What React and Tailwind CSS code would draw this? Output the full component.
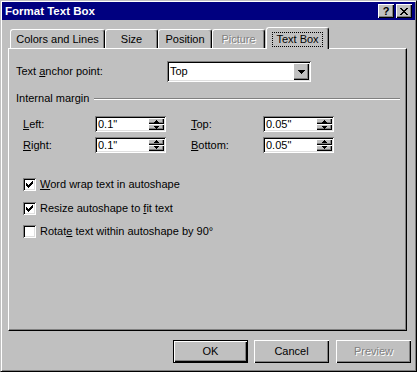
import React from "react";

const raised =
  "shadow-[inset_1px_1px_#fff,inset_-1px_-1px_#000,inset_-2px_-2px_#808080]";
const sunken =
  "shadow-[inset_1px_1px_#808080,inset_-1px_-1px_#fff,inset_2px_2px_#000,inset_-2px_-2px_#dfdfdf]";

function Tab({ w, ml = 0, children, disabled }) {
  return (
    <div
      className={`h-[19px] flex justify-center pt-[3px] leading-[13px] border-l border-t border-white border-r border-r-black rounded-t-[3px] shadow-[inset_-1px_0_#808080] ${
        disabled ? "text-[#808080] [text-shadow:1px_1px_0_#fff]" : "text-black"
      }`}
      style={{ width: w, marginLeft: ml }}
    >
      {children}
    </div>
  );
}

function SpinTri({ up }) {
  return (
    <svg width="5" height="3" viewBox="0 0 5 3" shapeRendering="crispEdges">
      {up ? (
        <>
          <rect x="2" y="0" width="1" height="1" fill="#000" />
          <rect x="1" y="1" width="3" height="1" fill="#000" />
          <rect x="0" y="2" width="5" height="1" fill="#000" />
        </>
      ) : (
        <>
          <rect x="0" y="0" width="5" height="1" fill="#000" />
          <rect x="1" y="1" width="3" height="1" fill="#000" />
          <rect x="2" y="2" width="1" height="1" fill="#000" />
        </>
      )}
    </svg>
  );
}

function Spin({ value }) {
  return (
    <div className={`w-[71px] h-[16px] bg-white p-[2px] flex ${sunken}`}>
      <div className="flex-1 pl-[1px] leading-[12px] text-black">{value}</div>
      <div className="w-[16px] flex flex-col">
        <div className={`h-[6px] bg-[#c0c0c0] flex items-center justify-center ${raised}`}>
          <SpinTri up />
        </div>
        <div className={`h-[6px] bg-[#c0c0c0] flex items-center justify-center ${raised}`}>
          <SpinTri />
        </div>
      </div>
    </div>
  );
}

function Check() {
  const cols = [2, 3, 4, 3, 2, 1, 0];
  return (
    <svg width="7" height="7" viewBox="0 0 7 7" shapeRendering="crispEdges">
      {cols.map((y, x) => (
        <rect key={x} x={x} y={y} width="1" height="3" fill="#000" />
      ))}
    </svg>
  );
}

function CheckRow({ checked, children, className = "" }) {
  return (
    <div className={`flex items-center h-[13px] ${className}`}>
      <div className={`w-[13px] h-[13px] bg-white flex items-center justify-center ${sunken}`}>
        {checked && <Check />}
      </div>
      <div className="ml-[4px] leading-[13px]">{children}</div>
    </div>
  );
}

function Btn({ children, def, disabled, className = "" }) {
  return (
    <div
      className={`w-[75px] h-[23px] flex items-center justify-center bg-[#c0c0c0] ${
        def
          ? "border border-black shadow-[inset_1px_1px_#fff,inset_-1px_-1px_#000,inset_-2px_-2px_#808080]"
          : raised
      } ${disabled ? "text-[#808080] [text-shadow:1px_1px_0_#fff]" : "text-black"} ${className}`}
    >
      {children}
    </div>
  );
}

export default function App() {
  return (
    <div className="w-[417px] h-[372px] bg-[#c0c0c0] border border-t-[#c0c0c0] border-l-[#c0c0c0] border-r-black border-b-black font-['Liberation_Sans',Arial,sans-serif] text-[11px] text-black">
      <div className="w-full h-full p-[1px] shadow-[inset_1px_1px_#fff,inset_-1px_-1px_#808080]">
        {/* Title bar */}
        <div className="h-[18px] bg-[#000080] flex items-center pl-[3px] pr-[3px]">
          <div className="flex-1 text-white font-bold text-[11.5px] leading-[14px]">
            Format Text Box
          </div>
          <div className={`w-[16px] h-[14px] bg-[#c0c0c0] flex items-center justify-center ${raised}`}>
            <span className="font-bold text-[11px] leading-[11px] text-black">?</span>
          </div>
          <div className={`w-[16px] h-[14px] ml-[2px] bg-[#c0c0c0] flex items-center justify-center ${raised}`}>
            <svg width="8" height="7" viewBox="0 0 8 7" shapeRendering="crispEdges">
              <rect x="0" y="0" width="2" height="1" fill="#000" />
              <rect x="6" y="0" width="2" height="1" fill="#000" />
              <rect x="1" y="1" width="2" height="1" fill="#000" />
              <rect x="5" y="1" width="2" height="1" fill="#000" />
              <rect x="2" y="2" width="4" height="1" fill="#000" />
              <rect x="3" y="3" width="2" height="1" fill="#000" />
              <rect x="2" y="4" width="4" height="1" fill="#000" />
              <rect x="1" y="5" width="2" height="1" fill="#000" />
              <rect x="5" y="5" width="2" height="1" fill="#000" />
              <rect x="0" y="6" width="2" height="1" fill="#000" />
              <rect x="6" y="6" width="2" height="1" fill="#000" />
            </svg>
          </div>
        </div>

        {/* Body */}
        <div className="pl-[6px]">
          {/* Tabs */}
          <div className="mt-[7px] h-[21px] flex items-end pl-[2px]">
            <Tab w={95}>Colors and Lines</Tab>
            <Tab w={53}>Size</Tab>
            <Tab w={54}>Position</Tab>
            <Tab w={53} disabled>
              Picture
            </Tab>
            <div className="relative z-10 ml-[1px] -mb-[1px] w-[63px] h-[22px] bg-[#c0c0c0] flex justify-center pt-[4px] border-l border-t border-white border-r border-r-black rounded-t-[3px] shadow-[inset_-1px_0_#808080]">
              <span className="h-[15px] px-[3px] border border-dotted border-black leading-[13px]">
                Text Box
              </span>
            </div>
          </div>

          {/* Panel */}
          <div className="w-[399px] h-[283px] border-l border-t border-white border-r border-b border-r-black border-b-black shadow-[inset_-1px_-1px_#808080]">
            <div className="mt-[12px] pl-[7px] flex items-center">
              <div className="w-[151px]">
                Text <u>a</u>nchor point:
              </div>
              <div className={`w-[144px] h-[21px] bg-white p-[2px] flex ${sunken}`}>
                <div className="flex-1 pl-[1px] leading-[17px]">Top</div>
                <div className={`w-[16px] h-[17px] bg-[#c0c0c0] flex items-center justify-center ${raised}`}>
                  <svg width="7" height="4" viewBox="0 0 7 4" shapeRendering="crispEdges">
                    <rect x="0" y="0" width="7" height="1" fill="#000" />
                    <rect x="1" y="1" width="5" height="1" fill="#000" />
                    <rect x="2" y="2" width="3" height="1" fill="#000" />
                    <rect x="3" y="3" width="1" height="1" fill="#000" />
                  </svg>
                </div>
              </div>
            </div>

            <div className="mt-[10px] h-[13px] pl-[7px] pr-[6px] flex items-center">
              <div className="leading-[13px]">Internal margin</div>
              <div className="ml-[5px] flex-1 h-[2px] border-t border-t-[#808080] border-b border-b-white" />
            </div>

            <div className="mt-[11px] pl-[14px] flex items-center">
              <div className="w-[72px]">
                <u>L</u>eft:
              </div>
              <Spin value={'0.1"'} />
              <div className="w-[25px]" />
              <div className="w-[72px]">
                <u>T</u>op:
              </div>
              <Spin value={'0.05"'} />
            </div>
            <div className="mt-[4px] pl-[14px] flex items-center">
              <div className="w-[72px]">
                <u>R</u>ight:
              </div>
              <Spin value={'0.1"'} />
              <div className="w-[25px]" />
              <div className="w-[72px]">
                <u>B</u>ottom:
              </div>
              <Spin value={'0.05"'} />
            </div>

            <div className="mt-[25px] pl-[14px]">
              <CheckRow checked>
                <u>W</u>ord wrap text in autoshape
              </CheckRow>
              <CheckRow checked className="mt-[11px]">
                Resize autoshape to <u>f</u>it text
              </CheckRow>
              <CheckRow className="mt-[10px]">
                Rotat<u>e</u> text within autoshape by 90°
              </CheckRow>
            </div>
          </div>

          {/* Buttons */}
          <div className="mt-[9px] flex justify-end pr-[4px]">
            <Btn def>OK</Btn>
            <Btn className="ml-[6px]">Cancel</Btn>
            <Btn disabled className="ml-[7px]">
              Preview
            </Btn>
          </div>
        </div>
      </div>
    </div>
  );
}
